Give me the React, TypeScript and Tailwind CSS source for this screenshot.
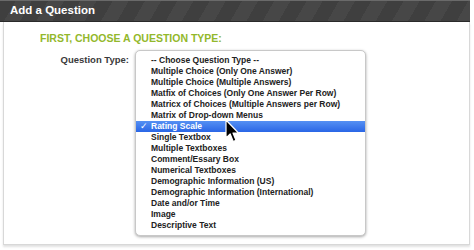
import React from 'react';

const options = [
  '-- Choose Question Type --',
  'Multiple Choice (Only One Answer)',
  'Multiple Choice (Multiple Answers)',
  'Matfix of Choices (Only One Answer Per Row)',
  'Matricx of Choices (Multiple Answers per Row)',
  'Matrix of Drop-down Menus',
  'Rating Scale',
  'Single Textbox',
  'Multiple Textboxes',
  'Comment/Essary Box',
  'Numerical Textboxes',
  'Demographic Information (US)',
  'Demographic Information (International)',
  'Date and/or Time',
  'Image',
  'Descriptive Text',
];

const SELECTED = 'Rating Scale';

function Cursor() {
  return (
    <svg
      className="absolute left-[89px] top-[68px]"
      width="14"
      height="24"
      viewBox="0 0 14 24"
    >
      <path
        d="M1 1 L1 19 L5.2 15 L8.2 22.5 L11 21.3 L8 14 L13.5 14 Z"
        fill="#000"
        stroke="#fff"
        strokeWidth="1.2"
        strokeLinejoin="round"
      />
    </svg>
  );
}

export default function App() {
  return (
    <div className="h-[250px] w-[474px] overflow-hidden bg-white font-['Liberation_Sans',Arial,sans-serif]">
      <div className="w-[470px]">
        {/* Header bar */}
        <div className="flex h-[22px] items-center border-b border-[#2a2a2a] bg-[repeating-linear-gradient(120deg,#3f3f3f_0px,#3f3f3f_14px,#474747_14px,#474747_28px)] px-[10px] shadow-[inset_0_1px_0_#6a6a6a]">
          <span className="text-[11.5px] font-bold text-white">Add a Question</span>
        </div>

        {/* Body */}
        <div className="ml-[3px] h-[223px] border-x border-b border-[#d8d8d8] bg-white shadow-[0_2px_2px_#e2e2e2]">
          <div className="pl-[36px] pt-[10px] text-[10.5px] font-bold leading-[13px] text-[#93b82c]">
            FIRST, CHOOSE A QUESTION TYPE:
          </div>

          <div className="mt-[5px] flex items-start">
            <div className="w-[125px] pt-[3px] text-right text-[9.5px] font-bold text-[#3a3a3a]">
              Question Type:
            </div>
            <div className="relative ml-[6px] w-[231px] rounded-[5px] border border-[#c8c8c8] bg-white py-[4px] shadow-[0_1px_3px_rgba(0,0,0,0.35)]">
              {options.map((o) => {
                const sel = o === SELECTED;
                return (
                  <div
                    key={o}
                    className={
                      sel
                        ? 'flex h-[11px] items-center bg-[linear-gradient(#5590f3,#2a66e6)] text-white'
                        : 'flex h-[11px] items-center text-[#222]'
                    }
                  >
                    <span className="w-[15px] shrink-0 pl-[4px] text-[9px]">{sel ? '✓' : ''}</span>
                    <span className="whitespace-nowrap text-[8.5px] font-bold leading-[11px]">{o}</span>
                  </div>
                );
              })}
              <Cursor />
            </div>
          </div>
        </div>
      </div>
    </div>
  );
}
